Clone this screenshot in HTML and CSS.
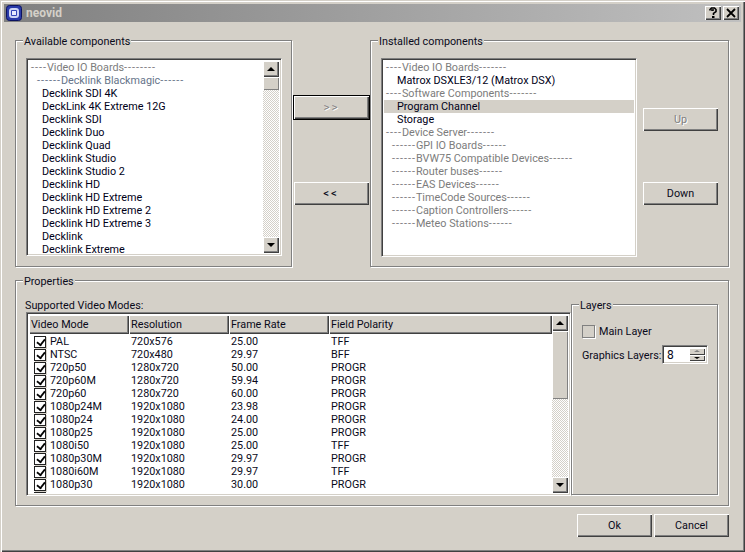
FILE: index.html
```html
<!DOCTYPE html>
<html lang="en">
<head>
<meta charset="utf-8">
<title>neovid</title>
<link rel="stylesheet" href="styles.css">
</head>
<body>
<div class="window">
  <header class="titlebar">
    <svg class="app-icon" viewBox="0 0 16 16" width="16" height="16"><rect x="0.5" y="0.5" width="15" height="15" rx="3" fill="#2a3aa8" stroke="#0b1260"/><rect x="3" y="3" width="10" height="10" rx="3" fill="#cfd6f5"/><rect x="5" y="5" width="6" height="6" rx="1" fill="#3446b8"/><rect x="6" y="6" width="4" height="4" fill="#e8ecff"/></svg>
    <span class="title">neovid</span>
    <button class="cap-btn"><svg viewBox="0 0 16 14" width="16" height="14"><path d="M5 4.5 V3.5 L6.5 2 H9.5 L11 3.5 V5.5 L8.5 7.5 V9 M7 5 V4 H9" fill="none" stroke="#000" stroke-width="1.6"/><rect x="7" y="10" width="2.5" height="2" fill="#000"/></svg></button>
    <button class="cap-btn"><svg viewBox="0 0 16 14" width="16" height="14"><path d="M4 3 L12 11 M12 3 L4 11" fill="none" stroke="#000" stroke-width="1.8"/></svg></button>
  </header>

  <main class="content">
    <section class="top-row">
      <div class="group available">
        <span class="legend">Available components</span>
        <div class="sunken listbox">
          <ul class="items">
            <li class="h1"><span class="d">----</span>Video IO Boards<span class="d">--------</span></li>
            <li class="h2 blue"><span class="d">------</span>Decklink Blackmagic<span class="d">------</span></li>
            <li class="it">Decklink SDI 4K</li>
            <li class="it">DeckLink 4K Extreme 12G</li>
            <li class="it">Decklink SDI</li>
            <li class="it">Decklink Duo</li>
            <li class="it">Decklink Quad</li>
            <li class="it">Decklink Studio</li>
            <li class="it">Decklink Studio 2</li>
            <li class="it">Decklink HD</li>
            <li class="it">Decklink HD Extreme</li>
            <li class="it">Decklink HD Extreme 2</li>
            <li class="it">Decklink HD Extreme 3</li>
            <li class="it">Decklink</li>
            <li class="it">Decklink Extreme</li>
          </ul>
          <div class="scrollbar">
            <span class="sb-btn"><i class="arrow up"></i></span>
            <span class="thumb small"></span>
            <span class="track"></span>
            <span class="sb-btn"><i class="arrow down"></i></span>
          </div>
        </div>
      </div>

      <div class="transfer">
        <button class="btn default disabled">&gt;&gt;</button>
        <button class="btn">&lt;&lt;</button>
      </div>

      <div class="group installed">
        <span class="legend">Installed components</span>
        <div class="sunken listbox">
          <ul class="items">
            <li class="h1"><span class="d">----</span>Video IO Boards<span class="d">-------</span></li>
            <li class="it">Matrox DSXLE3/12 (Matrox DSX)</li>
            <li class="h1"><span class="d">----</span>Software Components<span class="d">-------</span></li>
            <li class="it selected">Program Channel</li>
            <li class="it">Storage</li>
            <li class="h1"><span class="d">----</span>Device Server<span class="d">-------</span></li>
            <li class="h2"><span class="d">------</span>GPI IO Boards<span class="d">------</span></li>
            <li class="h2"><span class="d">------</span>BVW75 Compatible Devices<span class="d">------</span></li>
            <li class="h2"><span class="d">------</span>Router buses<span class="d">------</span></li>
            <li class="h2"><span class="d">------</span>EAS Devices<span class="d">------</span></li>
            <li class="h2"><span class="d">------</span>TimeCode Sources<span class="d">------</span></li>
            <li class="h2"><span class="d">------</span>Caption Controllers<span class="d">------</span></li>
            <li class="h2"><span class="d">------</span>Meteo Stations<span class="d">------</span></li>
          </ul>
        </div>
        <div class="side-btns">
          <button class="btn disabled">Up</button>
          <button class="btn">Down</button>
        </div>
      </div>
    </section>

    <section class="group properties">
      <span class="legend">Properties</span>
      <div class="modes">
        <div class="modes-label">Supported Video Modes:</div>
        <div class="sunken table-frame">
          <div class="table-main">
            <div class="t-head">
              <span class="th c1">Video Mode</span>
              <span class="th c2">Resolution</span>
              <span class="th c3">Frame Rate</span>
              <span class="th c4">Field Polarity</span>
            </div>
            <div class="t-body">
              <div class="tr"><span class="td c1"><i class="cb on"></i>PAL</span><span class="td c2">720x576</span><span class="td c3">25.00</span><span class="td c4">TFF</span></div>
              <div class="tr"><span class="td c1"><i class="cb on"></i>NTSC</span><span class="td c2">720x480</span><span class="td c3">29.97</span><span class="td c4">BFF</span></div>
              <div class="tr"><span class="td c1"><i class="cb on"></i>720p50</span><span class="td c2">1280x720</span><span class="td c3">50.00</span><span class="td c4">PROGR</span></div>
              <div class="tr"><span class="td c1"><i class="cb on"></i>720p60M</span><span class="td c2">1280x720</span><span class="td c3">59.94</span><span class="td c4">PROGR</span></div>
              <div class="tr"><span class="td c1"><i class="cb on"></i>720p60</span><span class="td c2">1280x720</span><span class="td c3">60.00</span><span class="td c4">PROGR</span></div>
              <div class="tr"><span class="td c1"><i class="cb on"></i>1080p24M</span><span class="td c2">1920x1080</span><span class="td c3">23.98</span><span class="td c4">PROGR</span></div>
              <div class="tr"><span class="td c1"><i class="cb on"></i>1080p24</span><span class="td c2">1920x1080</span><span class="td c3">24.00</span><span class="td c4">PROGR</span></div>
              <div class="tr"><span class="td c1"><i class="cb on"></i>1080p25</span><span class="td c2">1920x1080</span><span class="td c3">25.00</span><span class="td c4">PROGR</span></div>
              <div class="tr"><span class="td c1"><i class="cb on"></i>1080i50</span><span class="td c2">1920x1080</span><span class="td c3">25.00</span><span class="td c4">TFF</span></div>
              <div class="tr"><span class="td c1"><i class="cb on"></i>1080p30M</span><span class="td c2">1920x1080</span><span class="td c3">29.97</span><span class="td c4">PROGR</span></div>
              <div class="tr"><span class="td c1"><i class="cb on"></i>1080i60M</span><span class="td c2">1920x1080</span><span class="td c3">29.97</span><span class="td c4">TFF</span></div>
              <div class="tr"><span class="td c1"><i class="cb on"></i>1080p30</span><span class="td c2">1920x1080</span><span class="td c3">30.00</span><span class="td c4">PROGR</span></div>
              <div class="tr"><span class="td c1"><i class="cb on"></i>1080i60</span><span class="td c2">1920x1080</span><span class="td c3">30.00</span><span class="td c4">TFF</span></div>
            </div>
          </div>
          <div class="scrollbar">
            <span class="sb-btn"><i class="arrow up"></i></span>
            <span class="thumb big"></span>
            <span class="track"></span>
            <span class="sb-btn"><i class="arrow down"></i></span>
          </div>
        </div>
      </div>
      <div class="group layers">
        <span class="legend">Layers</span>
        <label class="main-layer"><i class="cb big"></i>Main Layer</label>
        <div class="gfx">
          <span>Graphics Layers:</span>
          <div class="sunken spin">
            <span class="spin-val">8</span>
            <span class="spin-btns">
              <span class="spin-btn"><i class="arrow up tiny gray"></i></span>
              <span class="spin-btn"><i class="arrow down tiny"></i></span>
            </span>
          </div>
        </div>
      </div>
    </section>

    <footer class="footer">
      <button class="btn">Ok</button>
      <button class="btn">Cancel</button>
    </footer>
  </main>
</div>
</body>
</html>
```

FILE: styles.css
```css
* { box-sizing: border-box; }
html, body { margin: 0; padding: 0; }
body {
  width: 745px; height: 552px; overflow: hidden;
  font-family: Roboto, "Noto Sans", sans-serif;
  font-size: 10.8px; line-height: 13px; color: #0a0a1a;
  background: #fff;
}
ul { list-style: none; margin: 0; padding: 0; }
i { display: block; font-style: normal; }

.window {
  width: 745px; height: 552px;
  background: #d4d0c8;
  padding: 4px 4px 0;
  display: flex; flex-direction: column;
  box-shadow: inset 1px 1px 0 #d4d0c8, inset 2px 2px 0 #fff, inset -1px -1px 0 #404040, inset -2px -2px 0 #808080;
}

.titlebar {
  height: 18px; flex: none;
  background: linear-gradient(90deg, #808080, #c0c0c0);
  display: flex; align-items: center;
  padding: 0 2px;
  gap: 2px;
}
.app-icon { flex: none; }
.title {
  flex: 1; margin-left: 2px;
  font-weight: 700; font-size: 12px; color: #d4d0c8;
}
.cap-btn {
  width: 16px; height: 14px; padding: 0; border: 0; flex: none;
  background: #d4d0c8;
  box-shadow: inset 1px 1px 0 #fff, inset -1px -1px 0 #404040, inset -2px -2px 0 #808080;
  display: block;
}
.cap-btn svg { display: block; }

.content {
  flex: 1; display: flex; flex-direction: column;
  padding: 18px 12px 0 11px;
}

.group {
  position: relative;
  border: 1px solid #808080;
  box-shadow: inset 1px 1px 0 #fff, 1px 1px 0 #fff;
}
.legend {
  position: absolute; left: 7px; top: -6px;
  padding: 0 1px; background: #d4d0c8; line-height: 13px;
  white-space: nowrap;
}

.top-row { display: flex; height: 227px; flex: none; }
.available { width: 277px; padding: 17px 10px 0; flex: none; }
.installed { flex: 1; padding: 17px 10px 0; display: flex; }
.transfer {
  width: 78px; flex: none; padding-top: 55px;
  display: flex; flex-direction: column; align-items: center; gap: 62px;
}
.transfer .btn { width: 75px; height: 23px; letter-spacing: 2px; font-size: 11.5px; }
.transfer .default { width: 77px; height: 25px; margin-left: 1px; }

.sunken {
  border: 1px solid #808080; border-right-color: #fff; border-bottom-color: #fff;
  box-shadow: inset 1px 1px 0 #404040, inset -1px -1px 0 #d4d0c8;
  background: #fff;
}
.listbox {
  width: 256px; height: 198px; display: flex; padding: 2px; flex: none; overflow: hidden;
}
.installed .listbox { height: 199px; }
.items { flex: 1; min-width: 0; overflow: hidden; }
.items li { height: 13px; white-space: nowrap; }
.h1 { padding-left: 2px; color: #7c7c7c; }
.h2 { padding-left: 8px; color: #7c7c7c; }
.h2.blue { color: #66748a; }
.d { letter-spacing: 1px; }
.it { padding-left: 13px; color: #000018; }
.selected { background: #d4d0c8; }

.scrollbar { width: 16px; flex: none; display: flex; flex-direction: column; }
.sb-btn, .thumb {
  display: flex; align-items: center; justify-content: center; flex: none;
  background: #d4d0c8;
  box-shadow: inset 1px 1px 0 #fff, inset -1px -1px 0 #404040, inset -2px -2px 0 #808080;
}
.sb-btn { height: 16px; }
.thumb { box-shadow: inset 1px 1px 0 #fff, inset -1px -1px 0 #808080; }
.thumb.small { height: 13px; }
.thumb.big { height: 68px; }
.track {
  flex: 1;
  background: repeating-conic-gradient(#d4d0c8 0 25%, #fff 0 50%) 0 0 / 2px 2px;
}
.arrow { width: 0; height: 0; border-left: 4px solid transparent; border-right: 4px solid transparent; }
.arrow.up { border-bottom: 4px solid #000; }
.arrow.down { border-top: 4px solid #000; }
.arrow.tiny { border-left-width: 3px; border-right-width: 3px; }
.arrow.tiny.up { border-bottom-width: 2px; }
.arrow.tiny.down { border-top-width: 2px; }
.arrow.gray.up { border-bottom-color: #808080; }

.btn {
  font: inherit; color: #0a0a1a; padding: 0; border: 0; background: #d4d0c8;
  box-shadow: inset 1px 1px 0 #fff, inset -1px -1px 0 #404040, inset -2px -2px 0 #808080;
  display: block; text-align: center;
}
.btn.disabled { color: #808080; text-shadow: 1px 1px 0 #fff; }
.btn.default { border: 1px solid #000; }
.side-btns {
  flex: 1; display: flex; flex-direction: column; align-items: flex-end;
  padding-top: 50px; gap: 51px;
}
.side-btns .btn { width: 75px; height: 23px; }

.properties {
  margin-top: 13px; height: 226px; flex: none;
  display: flex; padding: 18px 10px 0;
}
.modes { width: 545px; flex: none; }
.modes-label { height: 13px; margin-left: -1px; }
.table-frame { width: 545px; height: 184px; display: flex; padding: 2px; overflow: hidden; }
.table-main { flex: 1; min-width: 0; display: flex; flex-direction: column; overflow: hidden; }
.t-head { display: flex; height: 19px; flex: none; }
.th {
  display: block; padding: 3px 0 0 2px; background: #d4d0c8;
  box-shadow: inset 1px 1px 0 #fff, inset -1px -1px 0 #404040, inset -2px -2px 0 #808080;
}
.c1, .c2, .c3 { width: 100px; flex: none; }
.c4 { flex: 1; }
.t-body { flex: 1; overflow: hidden; padding-top: 1px; }
.tr { display: flex; height: 13px; white-space: nowrap; }
.td { display: block; padding-left: 2px; }
.td.c1 { display: flex; align-items: center; gap: 4px; padding-left: 5px; }
.cb {
  width: 12px; height: 12px; flex: none;
  border: 1px solid #202020;
  box-shadow: 1px 1px 0 #d4d0c8;
  background: #fff;
}
.cb.on::after {
  content: ""; display: block;
  width: 4px; height: 7px; margin: 0 0 0 3px;
  border-right: 2px solid #000; border-bottom: 2px solid #000;
  transform: rotate(38deg) scale(.9);
}
.cb.big {
  width: 13px; height: 13px; margin-top: -1px; background: #d4d0c8;
  border-color: #808080; box-shadow: 1px 1px 0 #fff;
}

.layers {
  width: 147px; height: 191px; margin-top: 5px; flex: none;
  padding: 19px 9px 0 10px;
}
.main-layer { display: flex; align-items: center; gap: 4px; height: 14px; padding-top: 1px; }
.gfx { display: flex; align-items: center; margin-top: 7px; height: 19px; white-space: nowrap; }
.gfx > span { width: 80px; flex: none; padding-top: 2px; }
.spin { width: 46px; height: 19px; display: flex; padding: 2px; flex: none; padding-top: 2px; }
.spin-val { flex: 1; padding: 1px 0 0 2px; font-size: 12px; }
.spin-btns { width: 16px; display: flex; flex-direction: column; flex: none; }
.spin-btn {
  flex: 1; display: flex; align-items: center; justify-content: center; background: #d4d0c8;
  box-shadow: inset 1px 1px 0 #fff, inset -1px -1px 0 #404040;
}

.footer {
  display: flex; justify-content: flex-end; gap: 2px; margin-top: 8px;
}
.footer .btn { width: 75px; height: 23px; }
```
